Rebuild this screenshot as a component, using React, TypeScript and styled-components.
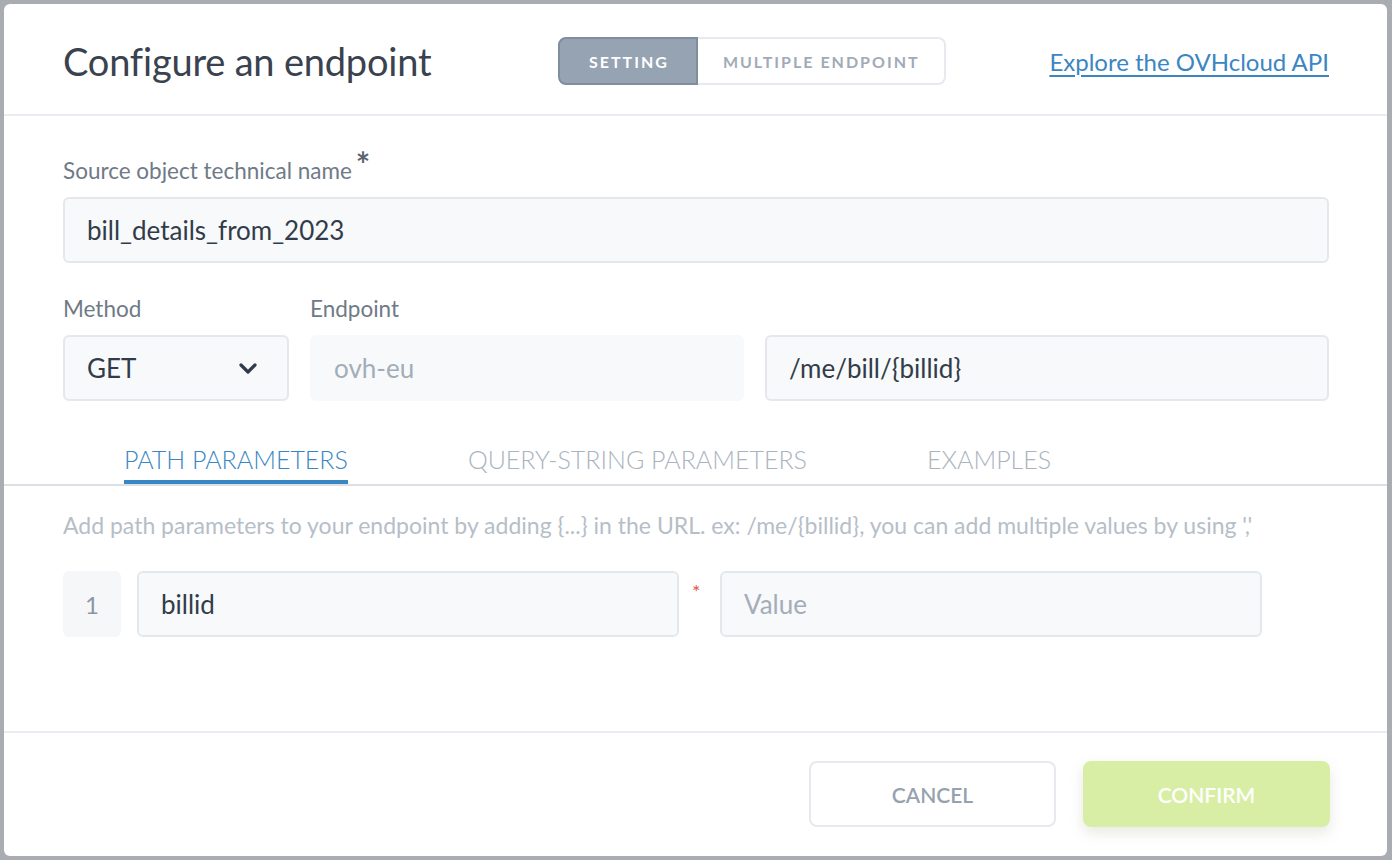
import styled, { createGlobalStyle } from "styled-components";

const GlobalStyle = createGlobalStyle`
  html, body {
    margin: 0;
    padding: 0;
    background: #a9adb2;
  }
  body {
    font-family: "Lato", "Open Sans", sans-serif;
  }
  * {
    box-sizing: border-box;
  }
`;

const Backdrop = styled.div`
  width: 1392px;
  height: 860px;
  padding: 4px 5px 4px 4px;
`;

const Modal = styled.div`
  height: 100%;
  background: #ffffff;
  border-radius: 6px;
  display: flex;
  flex-direction: column;
  overflow: hidden;
`;

const Header = styled.header`
  height: 112px;
  flex-shrink: 0;
  display: grid;
  grid-template-columns: 495px auto 1fr;
  align-items: center;
  padding: 4px 58px 0 59px;
  border-bottom: 2px solid #e8ebef;
`;

const Title = styled.h1`
  margin: 0;
  font-size: 38px;
  font-weight: 400;
  color: #3a4250;
  letter-spacing: -0.2px;
`;

const Toggle = styled.div`
  display: flex;
  height: 48px;
`;

const ToggleButton = styled.button<{ $active?: boolean }>`
  height: 100%;
  padding: 0 ${(p) => (p.$active ? "27px 0 29px" : "24px 0 25px")};
  font-family: inherit;
  font-size: 16px;
  font-weight: 700;
  letter-spacing: 2px;
  text-transform: uppercase;
  cursor: pointer;
  border: 2px solid ${(p) => (p.$active ? "#7f8d9d" : "#e6e9ee")};
  background: ${(p) => (p.$active ? "#95a3b3" : "#ffffff")};
  color: ${(p) => (p.$active ? "#ffffff" : "#a1abb7")};
  border-radius: ${(p) => (p.$active ? "8px 0 0 8px" : "0 8px 8px 0")};
  ${(p) => (p.$active ? "" : "border-left: none;")}
`;

const ExploreLink = styled.a`
  justify-self: end;
  font-size: 24px;
  color: #3a86c3;
  text-decoration: underline;
  text-underline-offset: 4px;
  text-decoration-thickness: 2px;
`;

const Body = styled.div`
  flex: 1;
  display: flex;
  flex-direction: column;
`;

const Form = styled.div`
  padding: 41px 58px 0 59px;
`;

const Label = styled.label`
  display: block;
  height: 28px;
  font-size: 22.5px;
  line-height: 28px;
  color: #6f7a87;
  margin-bottom: 12px;
`;

const Star = styled.span`
  display: inline-block;
  line-height: 0;
  font-size: 34px;
  font-weight: 700;
  position: relative;
  top: -2px;
  margin-left: 4px;
  color: #5a6472;
`;

const Input = styled.div<{ $muted?: boolean; $plain?: boolean }>`
  height: 66px;
  display: flex;
  align-items: center;
  padding: 0 22px;
  font-size: 26px;
  background: #f8f9fb;
  border: 2px solid ${(p) => (p.$plain ? "#f8f9fb" : "#e4e8ed")};
  border-radius: 6px;
  color: ${(p) => (p.$muted ? "#a3adb8" : "#323c49")};
  min-width: 0;
`;

const EndpointGrid = styled.div`
  margin-top: 32px;
  display: grid;
  grid-template-columns: 226px 434px 1fr;
  column-gap: 21px;
`;

const Field = styled.div`
  display: flex;
  flex-direction: column;
`;

const SelectBox = styled(Input)`
  justify-content: space-between;
  padding-right: 28px;
`;

const Tabs = styled.nav`
  margin-top: 30px;
  display: flex;
  gap: 120px;
  padding-left: 120px;
  border-bottom: 2px solid #dce0e5;
`;

const Tab = styled.div<{ $active?: boolean }>`
  font-size: 25px;
  font-weight: 300;
  line-height: 32px;
  padding: 12px 0 5px;
  color: ${(p) => (p.$active ? "#3a86c3" : "#aab3be")};
  border-bottom: 4px solid ${(p) => (p.$active ? "#3a86c3" : "transparent")};
`;

const Panel = styled.div`
  padding: 25px 58px 0 59px;
`;

const Hint = styled.p`
  margin: 0;
  font-size: 23px;
  line-height: 28px;
  color: #b6bec8;
`;

const ParamRow = styled.div`
  margin-top: 32px;
  display: flex;
  align-items: stretch;
`;

const Index = styled.div`
  width: 58px;
  height: 66px;
  display: flex;
  align-items: center;
  justify-content: center;
  background: #f5f7f9;
  border-radius: 6px;
  font-size: 24px;
  color: #8b95a1;
  margin-right: 16px;
`;

const ParamInput = styled(Input)`
  width: 542px;
`;

const Required = styled.span`
  width: 41px;
  padding: 8px 0 0 13px;
  color: #e2574c;
  font-size: 20px;
`;

const Footer = styled.footer`
  flex-shrink: 0;
  height: 125px;
  border-top: 2px solid #e8ebef;
  display: flex;
  justify-content: flex-end;
  align-items: flex-start;
  gap: 27px;
  padding: 28px 57px 0 0;
`;

const FooterButton = styled.button<{ $primary?: boolean }>`
  width: 247px;
  height: 66px;
  border-radius: 8px;
  font-family: inherit;
  font-size: 21px;
  font-weight: 600;
  text-transform: uppercase;
  cursor: pointer;
  border: 2px solid ${(p) => (p.$primary ? "#d8eea4" : "#e6e9ee")};
  background: ${(p) => (p.$primary ? "#d8eea4" : "#ffffff")};
  color: ${(p) => (p.$primary ? "#ffffff" : "#97a2af")};
  box-shadow: ${(p) => (p.$primary ? "0 6px 14px rgba(120, 140, 100, 0.18)" : "none")};
`;

function Chevron() {
  return (
    <svg width="22" height="22" viewBox="0 0 22 22" fill="none">
      <path d="M4 8l7 7 7-7" stroke="#323c49" strokeWidth="3.2" strokeLinecap="round" strokeLinejoin="round" />
    </svg>
  );
}

export default function App() {
  return (
    <>
      <GlobalStyle />
      <Backdrop>
        <Modal>
          <Header>
            <Title>Configure an endpoint</Title>
            <Toggle>
              <ToggleButton $active>Setting</ToggleButton>
              <ToggleButton>Multiple endpoint</ToggleButton>
            </Toggle>
            <ExploreLink href="#">Explore the OVHcloud API</ExploreLink>
          </Header>
          <Body>
            <Form>
              <Label>
                Source object technical name<Star>*</Star>
              </Label>
              <Input>bill_details_from_2023</Input>
              <EndpointGrid>
                <Field>
                  <Label>Method</Label>
                  <SelectBox>
                    GET
                    <Chevron />
                  </SelectBox>
                </Field>
                <Field>
                  <Label>Endpoint</Label>
                  <Input $muted $plain>
                    ovh-eu
                  </Input>
                </Field>
                <Field>
                  <Label>&nbsp;</Label>
                  <Input>/me/bill/{"{billid}"}</Input>
                </Field>
              </EndpointGrid>
            </Form>
            <Tabs>
              <Tab $active>PATH PARAMETERS</Tab>
              <Tab>QUERY-STRING PARAMETERS</Tab>
              <Tab>EXAMPLES</Tab>
            </Tabs>
            <Panel>
              <Hint>
                Add path parameters to your endpoint by adding {"{...}"} in the URL. ex: /me/{"{billid}"}, you can add
                multiple values by using ','
              </Hint>
              <ParamRow>
                <Index>1</Index>
                <ParamInput>billid</ParamInput>
                <Required>*</Required>
                <ParamInput $muted>Value</ParamInput>
              </ParamRow>
            </Panel>
          </Body>
          <Footer>
            <FooterButton>Cancel</FooterButton>
            <FooterButton $primary>Confirm</FooterButton>
          </Footer>
        </Modal>
      </Backdrop>
    </>
  );
}
